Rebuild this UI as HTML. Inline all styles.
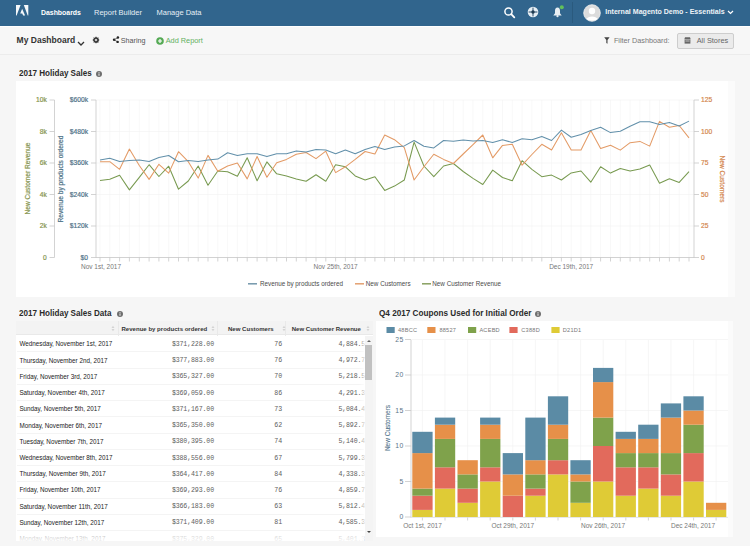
<!DOCTYPE html>
<html><head><meta charset="utf-8">
<style>
*{margin:0;padding:0;box-sizing:border-box}
html,body{width:750px;height:546px;overflow:hidden;background:#f6f6f6;font-family:"Liberation Sans",sans-serif;position:relative}
.abs{position:absolute}
.ttl{font-weight:bold;font-size:8.9px;color:#2b2b2b;transform:scaleX(0.91);transform-origin:0 0}
#hdr{position:absolute;left:0;top:0;width:750px;height:25.5px;background:#31658d}
#hdr .n{position:absolute;top:7.6px;color:#e6eef5;font-size:7.5px;white-space:nowrap}
#sub{position:absolute;left:0;top:26.5px;width:750px;height:28.5px;background:#f7f7f7;border-bottom:1px solid #ececec}
.txt{position:absolute;white-space:nowrap;line-height:1}
.panel{position:absolute;background:#fff}
.tr{position:absolute;left:1px;width:347px;height:16.2px;border-bottom:0.5px solid #f4f4f4;font-size:6.3px;color:#222;white-space:nowrap}
.tr span{position:absolute;top:5px;line-height:1}
.tr .c1{left:2.4px;top:5.1px}
.tr .c2{right:150px;font-family:"Liberation Mono",monospace;font-size:6.6px;letter-spacing:-0.13px;color:#606060;top:5.7px}
.tr .c3{right:82px;font-family:"Liberation Mono",monospace;font-size:6.6px;letter-spacing:-0.13px;color:#606060;top:5.7px}
.tr .c4{left:321.4px;font-family:"Liberation Mono",monospace;font-size:6.6px;letter-spacing:-0.13px;color:#606060;top:5.7px}
</style></head><body>
<div id="hdr">
 <svg class="abs" style="left:16px;top:5px" width="12.5" height="10.8" viewBox="0 0 12.5 10.8"><path d="M0,0 H4.6 L0.6,10.6 H0 Z M7.8,0 H12.3 V10.6 H11.7 Z M6.15,3.7 L9.1,10.6 H7.1 L6.25,8.4 H4.2 Z" fill="#f4f8fb"/></svg>
 <div class="n" style="left:40.6px;font-weight:bold;color:#fff;font-size:7.5px;top:7.7px;transform:scaleX(0.92);transform-origin:0 0">Dashboards</div>
 <div class="n" style="left:94px">Report Builder</div>
 <div class="n" style="left:156.5px">Manage Data</div>
 <svg class="abs" style="left:503px;top:6px" width="13" height="13" viewBox="0 0 13 13"><circle cx="5.5" cy="5.5" r="3.6" fill="none" stroke="#fff" stroke-width="1.5"/><path d="M8.2,8.2 L11.3,11.3" stroke="#fff" stroke-width="1.8" stroke-linecap="round"/></svg>
 <svg class="abs" style="left:527.3px;top:6px" width="12" height="12" viewBox="0 0 12 12"><circle cx="6" cy="6" r="5.3" fill="#e6eef4"/><path d="M6,1.6V10.4M1.6,6H10.4" stroke="#2c4f6b" stroke-width="1"/><circle cx="6" cy="6" r="1.7" fill="#1f3a50"/></svg>
 <svg class="abs" style="left:550.5px;top:4px" width="14" height="14" viewBox="0 0 14 14"><path d="M6.5,3.6 C4.7,3.6 4,5 4,6.8 L4,9.3 L2.3,11.6 L10.7,11.6 L9,9.3 L9,6.8 C9,5 8.3,3.6 6.5,3.6 Z" fill="#e8eef3"/><circle cx="6.5" cy="12.2" r="1.1" fill="#e8eef3"/><circle cx="10.8" cy="3.3" r="2" fill="#62c05a"/></svg>
 <div class="abs" style="left:572px;top:2px;width:1px;height:21px;background:#2a5a7e"></div>
 <svg class="abs" style="left:583px;top:3.5px" width="18" height="18" viewBox="0 0 18 18"><circle cx="9" cy="9" r="8.3" fill="#dcdcdc" stroke="#f2f2f2" stroke-width="0.8"/><circle cx="9" cy="7" r="3.2" fill="#fff"/><path d="M3.5,15 C4.5,11.5 13.5,11.5 14.5,15 C12.5,17 5.5,17 3.5,15Z" fill="#fff"/></svg>
 <div class="n" style="left:605.3px;font-weight:bold;color:#eef3f7;font-size:7.07px;top:7.8px">Internal Magento Demo - Essentials</div>
 <svg class="abs" style="left:727px;top:10px" width="7" height="5" viewBox="0 0 7 5"><path d="M1,1 L3.5,3.5 L6,1" fill="none" stroke="#fff" stroke-width="1.2"/></svg>
</div>
<div class="abs" style="left:0;top:25.5px;width:750px;height:1px;background:#fff"></div>
<div id="sub">
 <div class="txt" style="left:16.6px;top:9.8px;font-weight:bold;font-size:8.5px;color:#333">My Dashboard</div>
 <svg class="abs" style="left:77px;top:14px" width="8" height="6" viewBox="0 0 8 6"><path d="M1,1 L4,4 L7,1" fill="none" stroke="#333" stroke-width="1.3"/></svg>
 <svg class="abs" style="left:92.3px;top:9.8px" width="8" height="8" viewBox="0 0 8 8"><circle cx="4" cy="4" r="2.1" fill="none" stroke="#333" stroke-width="1.5"/><path d="M4,0.7V7.3M0.7,4H7.3M1.7,1.7L6.3,6.3M6.3,1.7L1.7,6.3" stroke="#333" stroke-width="0.9"/><circle cx="4" cy="4" r="1" fill="#f7f7f7"/></svg>
 <svg class="abs" style="left:112px;top:9.5px" width="8" height="7" viewBox="0 0 8 7"><circle cx="2.1" cy="3.7" r="1.25" fill="#222"/><circle cx="5.9" cy="1.6" r="1.25" fill="#222"/><circle cx="5.6" cy="5.9" r="1.25" fill="#222"/><path d="M2.1,3.7L5.9,1.6M2.1,3.7L5.6,5.9" stroke="#333" stroke-width="0.7"/></svg>
 <div class="txt" style="left:120.8px;top:10.8px;font-size:7.2px;color:#555">Sharing</div>
 <svg class="abs" style="left:155.8px;top:10.2px" width="8" height="8" viewBox="0 0 8 8"><circle cx="4" cy="4" r="3.8" fill="#55aa55"/><path d="M4,2V6M2,4H6" stroke="#fff" stroke-width="1.2"/></svg>
 <div class="txt" style="left:165.7px;top:10.8px;font-size:7.35px;color:#62b062">Add Report</div>
 <svg class="abs" style="left:604.2px;top:10.2px" width="6" height="7" viewBox="0 0 6 7"><path d="M0.2,0.3H5.6L3.5,3V6.7L2.3,6V3Z" fill="#444"/></svg>
 <div class="txt" style="left:613.9px;top:10.8px;font-size:7.26px;color:#777">Filter Dashboard:</div>
 <div class="abs" style="left:677.2px;top:6px;width:57.2px;height:16.5px;background:#ebebeb;border:1px solid #cdcdcd;border-radius:2px"></div>
 <svg class="abs" style="left:684.2px;top:10.8px" width="7" height="7" viewBox="0 0 7 7"><path d="M0.3,2.2L1,0.3H6L6.7,2.2Z" fill="#666"/><rect x="0.6" y="2.6" width="5.8" height="4" fill="#666"/><rect x="1.4" y="3.6" width="4.2" height="0.8" fill="#ddd"/></svg>
 <div class="txt" style="left:696.7px;top:10.8px;font-size:7.36px;color:#666">All Stores</div>
</div>

<div class="txt ttl" style="left:19px;top:68.6px">2017 Holiday Sales</div>
<svg class="abs" style="left:96.2px;top:71.3px" width="6" height="6" viewBox="0 0 6 6"><circle cx="3" cy="3" r="3" fill="#6e6e6e"/><rect x="2.5" y="2.5" width="1" height="2.3" fill="#eee"/><rect x="2.5" y="1.2" width="1" height="0.9" fill="#eee"/></svg>
<div class="panel" style="left:16px;top:80.5px;width:719px;height:216.8px"><div class="abs" style="left:712px;top:0;width:7px;height:216.8px;background:#fbfbfb"></div></div>

<div class="txt ttl" style="left:19.4px;top:308.7px">2017 Holiday Sales Data</div>
<svg class="abs" style="left:116.6px;top:311.2px" width="6" height="6" viewBox="0 0 6 6"><circle cx="3" cy="3" r="3" fill="#6e6e6e"/><rect x="2.5" y="2.5" width="1" height="2.3" fill="#eee"/><rect x="2.5" y="1.2" width="1" height="0.9" fill="#eee"/></svg>
<div class="panel" style="left:16px;top:320.8px;width:356.5px;height:220.2px;overflow:hidden">
 <div class="abs" style="left:0;top:0;width:356.5px;height:14.7px;background:#f3f3f3;border-bottom:1px solid #e9e9e9"></div>
</div>
<div class="abs" style="left:16px;top:336px;width:356.5px;height:205px;overflow:hidden"><div class="tr" style="top:0.3px"><span class="c1">Wednesday, November 1st, 2017</span><span class="c2">$371,228.00</span><span class="c3">76</span><span class="c4">4,884.55</span></div>
<div class="tr" style="top:16.5px"><span class="c1">Thursday, November 2nd, 2017</span><span class="c2">$377,883.00</span><span class="c3">76</span><span class="c4">4,972.71</span></div>
<div class="tr" style="top:32.8px"><span class="c1">Friday, November 3rd, 2017</span><span class="c2">$365,327.00</span><span class="c3">70</span><span class="c4">5,218.59</span></div>
<div class="tr" style="top:49.0px"><span class="c1">Saturday, November 4th, 2017</span><span class="c2">$369,059.00</span><span class="c3">86</span><span class="c4">4,291.31</span></div>
<div class="tr" style="top:65.2px"><span class="c1">Sunday, November 5th, 2017</span><span class="c2">$371,167.00</span><span class="c3">73</span><span class="c4">5,084.41</span></div>
<div class="tr" style="top:81.5px"><span class="c1">Monday, November 6th, 2017</span><span class="c2">$365,350.00</span><span class="c3">62</span><span class="c4">5,892.71</span></div>
<div class="tr" style="top:97.7px"><span class="c1">Tuesday, November 7th, 2017</span><span class="c2">$380,395.00</span><span class="c3">74</span><span class="c4">5,140.41</span></div>
<div class="tr" style="top:113.9px"><span class="c1">Wednesday, November 8th, 2017</span><span class="c2">$388,556.00</span><span class="c3">67</span><span class="c4">5,799.31</span></div>
<div class="tr" style="top:130.1px"><span class="c1">Thursday, November 9th, 2017</span><span class="c2">$364,417.00</span><span class="c3">84</span><span class="c4">4,338.31</span></div>
<div class="tr" style="top:146.4px"><span class="c1">Friday, November 10th, 2017</span><span class="c2">$369,293.00</span><span class="c3">76</span><span class="c4">4,859.71</span></div>
<div class="tr" style="top:162.6px"><span class="c1">Saturday, November 11th, 2017</span><span class="c2">$366,183.00</span><span class="c3">63</span><span class="c4">5,812.41</span></div>
<div class="tr" style="top:178.8px"><span class="c1">Sunday, November 12th, 2017</span><span class="c2">$371,409.00</span><span class="c3">81</span><span class="c4">4,585.31</span></div>
<div class="tr" style="top:195.1px"><span class="c1">Monday, November 13th, 2017</span><span class="c2">$375,329.00</span><span class="c3">65</span><span class="c4">5,401.31</span></div></div>
<div class="abs" style="left:17px;top:321px;width:355px;height:14.5px;font-size:6.05px;font-weight:bold;color:#333">
 <div class="abs" style="left:100.7px;top:0;width:1px;height:14.5px;background:#e9e9e9"></div>
 <div class="abs" style="left:200.2px;top:0;width:1px;height:14.5px;background:#e9e9e9"></div>
 <div class="abs" style="left:267.7px;top:0;width:1px;height:14.5px;background:#e9e9e9"></div>
 <div class="txt" style="left:104.5px;top:4.5px">Revenue by products ordered</div>
 <div class="txt" style="left:211px;top:4.5px">New Customers</div>
 <div class="txt" style="left:274.7px;top:4.5px">New Customer Revenue</div>
 <svg class="abs" style="left:94.2px;top:4px" width="4" height="7" viewBox="0 0 4 7"><path d="M0.5,3L2,0.8L3.5,3ZM0.5,4L2,6.2L3.5,4Z" fill="#d4d4d4"/></svg>
 <svg class="abs" style="left:193.6px;top:4px" width="4" height="7" viewBox="0 0 4 7"><path d="M0.5,3L2,0.8L3.5,3ZM0.5,4L2,6.2L3.5,4Z" fill="#d4d4d4"/></svg>
 <svg class="abs" style="left:264.9px;top:4px" width="4" height="7" viewBox="0 0 4 7"><path d="M0.5,3L2,0.8L3.5,3ZM0.5,4L2,6.2L3.5,4Z" fill="#d4d4d4"/></svg>
 <svg class="abs" style="left:349.2px;top:4px" width="4" height="7" viewBox="0 0 4 7"><path d="M0.5,3L2,0.8L3.5,3ZM0.5,4L2,6.2L3.5,4Z" fill="#d4d4d4"/></svg>
</div>
<div class="abs" style="left:359px;top:336px;width:5.6px;height:205px;background:linear-gradient(90deg,rgba(255,255,255,0),rgba(255,255,255,0.85))"></div><div class="abs" style="left:364.6px;top:336px;width:8px;height:205px;background:#f4f4f4"></div><svg class="abs" style="left:365.5px;top:339px" width="6" height="4" viewBox="0 0 6 4"><path d="M1,3L3,1L5,3Z" fill="#666"/></svg><svg class="abs" style="left:365.5px;top:530px" width="6" height="4" viewBox="0 0 6 4"><path d="M1,1L3,3L5,1Z" fill="#444"/></svg>
<div class="abs" style="left:365px;top:345px;width:6.5px;height:35px;background:#c1c1c1"></div>
<div class="abs" style="left:16px;top:532px;width:348px;height:9px;background:linear-gradient(rgba(255,255,255,0.6),rgba(255,255,255,0.92))"></div>

<div class="txt ttl" style="left:378.7px;top:308.7px;transform:scaleX(0.92)">Q4 2017 Coupons Used for Initial Order</div>
<svg class="abs" style="left:535.3px;top:311.2px" width="6" height="6" viewBox="0 0 6 6"><circle cx="3" cy="3" r="3" fill="#6e6e6e"/><rect x="2.5" y="2.5" width="1" height="2.3" fill="#eee"/><rect x="2.5" y="1.2" width="1" height="0.9" fill="#eee"/></svg>
<div class="panel" style="left:375.6px;top:320.8px;width:357.6px;height:216.3px"><div class="abs" style="left:352.4px;top:0;width:5.2px;height:216.3px;background:#fbfbfb"></div></div>
<svg class="abs" style="left:0;top:0" width="750" height="300" viewBox="0 0 750 300">
<g stroke="#f4f4f4" stroke-width="0.6"><line x1="100.0" y1="100.0" x2="100.0" y2="257.5"/><line x1="109.8" y1="100.0" x2="109.8" y2="257.5"/><line x1="119.6" y1="100.0" x2="119.6" y2="257.5"/><line x1="129.4" y1="100.0" x2="129.4" y2="257.5"/><line x1="139.3" y1="100.0" x2="139.3" y2="257.5"/><line x1="149.1" y1="100.0" x2="149.1" y2="257.5"/><line x1="158.9" y1="100.0" x2="158.9" y2="257.5"/><line x1="168.7" y1="100.0" x2="168.7" y2="257.5"/><line x1="178.5" y1="100.0" x2="178.5" y2="257.5"/><line x1="188.3" y1="100.0" x2="188.3" y2="257.5"/><line x1="198.2" y1="100.0" x2="198.2" y2="257.5"/><line x1="208.0" y1="100.0" x2="208.0" y2="257.5"/><line x1="217.8" y1="100.0" x2="217.8" y2="257.5"/><line x1="227.6" y1="100.0" x2="227.6" y2="257.5"/><line x1="237.4" y1="100.0" x2="237.4" y2="257.5"/><line x1="247.2" y1="100.0" x2="247.2" y2="257.5"/><line x1="257.1" y1="100.0" x2="257.1" y2="257.5"/><line x1="266.9" y1="100.0" x2="266.9" y2="257.5"/><line x1="276.7" y1="100.0" x2="276.7" y2="257.5"/><line x1="286.5" y1="100.0" x2="286.5" y2="257.5"/><line x1="296.3" y1="100.0" x2="296.3" y2="257.5"/><line x1="306.1" y1="100.0" x2="306.1" y2="257.5"/><line x1="316.0" y1="100.0" x2="316.0" y2="257.5"/><line x1="325.8" y1="100.0" x2="325.8" y2="257.5"/><line x1="335.6" y1="100.0" x2="335.6" y2="257.5"/><line x1="345.4" y1="100.0" x2="345.4" y2="257.5"/><line x1="355.2" y1="100.0" x2="355.2" y2="257.5"/><line x1="365.1" y1="100.0" x2="365.1" y2="257.5"/><line x1="374.9" y1="100.0" x2="374.9" y2="257.5"/><line x1="384.7" y1="100.0" x2="384.7" y2="257.5"/><line x1="394.5" y1="100.0" x2="394.5" y2="257.5"/><line x1="404.3" y1="100.0" x2="404.3" y2="257.5"/><line x1="414.1" y1="100.0" x2="414.1" y2="257.5"/><line x1="423.9" y1="100.0" x2="423.9" y2="257.5"/><line x1="433.8" y1="100.0" x2="433.8" y2="257.5"/><line x1="443.6" y1="100.0" x2="443.6" y2="257.5"/><line x1="453.4" y1="100.0" x2="453.4" y2="257.5"/><line x1="463.2" y1="100.0" x2="463.2" y2="257.5"/><line x1="473.0" y1="100.0" x2="473.0" y2="257.5"/><line x1="482.8" y1="100.0" x2="482.8" y2="257.5"/><line x1="492.7" y1="100.0" x2="492.7" y2="257.5"/><line x1="502.5" y1="100.0" x2="502.5" y2="257.5"/><line x1="512.3" y1="100.0" x2="512.3" y2="257.5"/><line x1="522.1" y1="100.0" x2="522.1" y2="257.5"/><line x1="531.9" y1="100.0" x2="531.9" y2="257.5"/><line x1="541.8" y1="100.0" x2="541.8" y2="257.5"/><line x1="551.6" y1="100.0" x2="551.6" y2="257.5"/><line x1="561.4" y1="100.0" x2="561.4" y2="257.5"/><line x1="571.2" y1="100.0" x2="571.2" y2="257.5"/><line x1="581.0" y1="100.0" x2="581.0" y2="257.5"/><line x1="590.8" y1="100.0" x2="590.8" y2="257.5"/><line x1="600.6" y1="100.0" x2="600.6" y2="257.5"/><line x1="610.5" y1="100.0" x2="610.5" y2="257.5"/><line x1="620.3" y1="100.0" x2="620.3" y2="257.5"/><line x1="630.1" y1="100.0" x2="630.1" y2="257.5"/><line x1="639.9" y1="100.0" x2="639.9" y2="257.5"/><line x1="649.7" y1="100.0" x2="649.7" y2="257.5"/><line x1="659.5" y1="100.0" x2="659.5" y2="257.5"/><line x1="669.4" y1="100.0" x2="669.4" y2="257.5"/><line x1="679.2" y1="100.0" x2="679.2" y2="257.5"/><line x1="689.0" y1="100.0" x2="689.0" y2="257.5"/></g>
<g stroke="#f1f1f1" stroke-width="0.6"><line x1="96" y1="100.0" x2="694" y2="100.0"/><line x1="96" y1="131.5" x2="694" y2="131.5"/><line x1="96" y1="163.0" x2="694" y2="163.0"/><line x1="96" y1="194.5" x2="694" y2="194.5"/><line x1="96" y1="226.0" x2="694" y2="226.0"/><line x1="96" y1="257.5" x2="694" y2="257.5"/></g>
<g stroke="#c8c8c8" stroke-width="0.8">
<line x1="54.5" y1="100" x2="54.5" y2="257.5"/>
<line x1="96" y1="100" x2="96" y2="258"/>
<line x1="694" y1="100" x2="694" y2="258"/>
<line x1="96" y1="257.5" x2="694" y2="257.5"/>
<line x1="100.0" y1="257.5" x2="100.0" y2="261.5"/><line x1="109.8" y1="257.5" x2="109.8" y2="261.5"/><line x1="119.6" y1="257.5" x2="119.6" y2="261.5"/><line x1="129.4" y1="257.5" x2="129.4" y2="261.5"/><line x1="139.3" y1="257.5" x2="139.3" y2="261.5"/><line x1="149.1" y1="257.5" x2="149.1" y2="261.5"/><line x1="158.9" y1="257.5" x2="158.9" y2="261.5"/><line x1="168.7" y1="257.5" x2="168.7" y2="261.5"/><line x1="178.5" y1="257.5" x2="178.5" y2="261.5"/><line x1="188.3" y1="257.5" x2="188.3" y2="261.5"/><line x1="198.2" y1="257.5" x2="198.2" y2="261.5"/><line x1="208.0" y1="257.5" x2="208.0" y2="261.5"/><line x1="217.8" y1="257.5" x2="217.8" y2="261.5"/><line x1="227.6" y1="257.5" x2="227.6" y2="261.5"/><line x1="237.4" y1="257.5" x2="237.4" y2="261.5"/><line x1="247.2" y1="257.5" x2="247.2" y2="261.5"/><line x1="257.1" y1="257.5" x2="257.1" y2="261.5"/><line x1="266.9" y1="257.5" x2="266.9" y2="261.5"/><line x1="276.7" y1="257.5" x2="276.7" y2="261.5"/><line x1="286.5" y1="257.5" x2="286.5" y2="261.5"/><line x1="296.3" y1="257.5" x2="296.3" y2="261.5"/><line x1="306.1" y1="257.5" x2="306.1" y2="261.5"/><line x1="316.0" y1="257.5" x2="316.0" y2="261.5"/><line x1="325.8" y1="257.5" x2="325.8" y2="261.5"/><line x1="335.6" y1="257.5" x2="335.6" y2="261.5"/><line x1="345.4" y1="257.5" x2="345.4" y2="261.5"/><line x1="355.2" y1="257.5" x2="355.2" y2="261.5"/><line x1="365.1" y1="257.5" x2="365.1" y2="261.5"/><line x1="374.9" y1="257.5" x2="374.9" y2="261.5"/><line x1="384.7" y1="257.5" x2="384.7" y2="261.5"/><line x1="394.5" y1="257.5" x2="394.5" y2="261.5"/><line x1="404.3" y1="257.5" x2="404.3" y2="261.5"/><line x1="414.1" y1="257.5" x2="414.1" y2="261.5"/><line x1="423.9" y1="257.5" x2="423.9" y2="261.5"/><line x1="433.8" y1="257.5" x2="433.8" y2="261.5"/><line x1="443.6" y1="257.5" x2="443.6" y2="261.5"/><line x1="453.4" y1="257.5" x2="453.4" y2="261.5"/><line x1="463.2" y1="257.5" x2="463.2" y2="261.5"/><line x1="473.0" y1="257.5" x2="473.0" y2="261.5"/><line x1="482.8" y1="257.5" x2="482.8" y2="261.5"/><line x1="492.7" y1="257.5" x2="492.7" y2="261.5"/><line x1="502.5" y1="257.5" x2="502.5" y2="261.5"/><line x1="512.3" y1="257.5" x2="512.3" y2="261.5"/><line x1="522.1" y1="257.5" x2="522.1" y2="261.5"/><line x1="531.9" y1="257.5" x2="531.9" y2="261.5"/><line x1="541.8" y1="257.5" x2="541.8" y2="261.5"/><line x1="551.6" y1="257.5" x2="551.6" y2="261.5"/><line x1="561.4" y1="257.5" x2="561.4" y2="261.5"/><line x1="571.2" y1="257.5" x2="571.2" y2="261.5"/><line x1="581.0" y1="257.5" x2="581.0" y2="261.5"/><line x1="590.8" y1="257.5" x2="590.8" y2="261.5"/><line x1="600.6" y1="257.5" x2="600.6" y2="261.5"/><line x1="610.5" y1="257.5" x2="610.5" y2="261.5"/><line x1="620.3" y1="257.5" x2="620.3" y2="261.5"/><line x1="630.1" y1="257.5" x2="630.1" y2="261.5"/><line x1="639.9" y1="257.5" x2="639.9" y2="261.5"/><line x1="649.7" y1="257.5" x2="649.7" y2="261.5"/><line x1="659.5" y1="257.5" x2="659.5" y2="261.5"/><line x1="669.4" y1="257.5" x2="669.4" y2="261.5"/><line x1="679.2" y1="257.5" x2="679.2" y2="261.5"/><line x1="689.0" y1="257.5" x2="689.0" y2="261.5"/></g>
<g font-family="Liberation Sans, sans-serif" font-size="6.7" stroke-width="0.8"><text x="46.8" y="102.3" text-anchor="end" fill="#86944e" stroke="#86944e" stroke-width="0.2">10k</text><text x="88" y="102.3" text-anchor="end" fill="#4f7388" stroke="#4f7388" stroke-width="0.2">$600k</text><text x="701" y="102.3" text-anchor="start" fill="#d4874f" stroke="#d4874f" stroke-width="0.2">125</text><line x1="49.5" y1="100.0" x2="54.5" y2="100.0" stroke="#c8c8c8"/><line x1="91" y1="100.0" x2="96" y2="100.0" stroke="#c8c8c8"/><line x1="694" y1="100.0" x2="699" y2="100.0" stroke="#c8c8c8"/><text x="46.8" y="133.8" text-anchor="end" fill="#86944e" stroke="#86944e" stroke-width="0.2">8k</text><text x="88" y="133.8" text-anchor="end" fill="#4f7388" stroke="#4f7388" stroke-width="0.2">$480k</text><text x="701" y="133.8" text-anchor="start" fill="#d4874f" stroke="#d4874f" stroke-width="0.2">100</text><line x1="49.5" y1="131.5" x2="54.5" y2="131.5" stroke="#c8c8c8"/><line x1="91" y1="131.5" x2="96" y2="131.5" stroke="#c8c8c8"/><line x1="694" y1="131.5" x2="699" y2="131.5" stroke="#c8c8c8"/><text x="46.8" y="165.3" text-anchor="end" fill="#86944e" stroke="#86944e" stroke-width="0.2">6k</text><text x="88" y="165.3" text-anchor="end" fill="#4f7388" stroke="#4f7388" stroke-width="0.2">$360k</text><text x="701" y="165.3" text-anchor="start" fill="#d4874f" stroke="#d4874f" stroke-width="0.2">75</text><line x1="49.5" y1="163.0" x2="54.5" y2="163.0" stroke="#c8c8c8"/><line x1="91" y1="163.0" x2="96" y2="163.0" stroke="#c8c8c8"/><line x1="694" y1="163.0" x2="699" y2="163.0" stroke="#c8c8c8"/><text x="46.8" y="196.8" text-anchor="end" fill="#86944e" stroke="#86944e" stroke-width="0.2">4k</text><text x="88" y="196.8" text-anchor="end" fill="#4f7388" stroke="#4f7388" stroke-width="0.2">$240k</text><text x="701" y="196.8" text-anchor="start" fill="#d4874f" stroke="#d4874f" stroke-width="0.2">50</text><line x1="49.5" y1="194.5" x2="54.5" y2="194.5" stroke="#c8c8c8"/><line x1="91" y1="194.5" x2="96" y2="194.5" stroke="#c8c8c8"/><line x1="694" y1="194.5" x2="699" y2="194.5" stroke="#c8c8c8"/><text x="46.8" y="228.3" text-anchor="end" fill="#86944e" stroke="#86944e" stroke-width="0.2">2k</text><text x="88" y="228.3" text-anchor="end" fill="#4f7388" stroke="#4f7388" stroke-width="0.2">$120k</text><text x="701" y="228.3" text-anchor="start" fill="#d4874f" stroke="#d4874f" stroke-width="0.2">25</text><line x1="49.5" y1="226.0" x2="54.5" y2="226.0" stroke="#c8c8c8"/><line x1="91" y1="226.0" x2="96" y2="226.0" stroke="#c8c8c8"/><line x1="694" y1="226.0" x2="699" y2="226.0" stroke="#c8c8c8"/><text x="46.8" y="259.8" text-anchor="end" fill="#86944e" stroke="#86944e" stroke-width="0.2">0</text><text x="88" y="259.8" text-anchor="end" fill="#4f7388" stroke="#4f7388" stroke-width="0.2">$0</text><text x="701" y="259.8" text-anchor="start" fill="#d4874f" stroke="#d4874f" stroke-width="0.2">0</text><line x1="49.5" y1="257.5" x2="54.5" y2="257.5" stroke="#c8c8c8"/><line x1="91" y1="257.5" x2="96" y2="257.5" stroke="#c8c8c8"/><line x1="694" y1="257.5" x2="699" y2="257.5" stroke="#c8c8c8"/></g>
<g fill="none" stroke-width="1.05" stroke-linejoin="round">
<path d="M100.0,180.6 L109.8,179.2 L119.6,175.3 L129.4,189.9 L139.3,177.4 L149.1,164.7 L158.9,176.5 L168.7,166.2 L178.5,189.2 L188.3,181.0 L198.2,166.0 L208.0,185.3 L217.8,171.0 L227.6,171.8 L237.4,176.2 L247.2,157.8 L257.1,180.8 L266.9,161.9 L276.7,173.8 L286.5,175.9 L296.3,178.9 L306.1,181.2 L316.0,174.7 L325.8,181.2 L335.6,164.7 L345.4,166.8 L355.2,175.9 L365.1,180.0 L374.9,176.7 L384.7,190.4 L394.5,186.1 L404.3,180.0 L414.1,142.1 L423.9,166.0 L433.8,176.7 L443.6,166.0 L453.4,163.5 L463.2,171.5 L473.0,178.4 L482.8,184.5 L492.7,170.1 L502.5,177.5 L512.3,180.8 L522.1,160.7 L531.9,169.3 L541.8,176.7 L551.6,175.1 L561.4,180.0 L571.2,172.9 L581.0,171.0 L590.8,182.2 L600.6,166.8 L610.5,173.1 L620.3,168.5 L630.1,171.1 L639.9,169.1 L649.7,165.1 L659.5,183.2 L669.4,178.7 L679.2,182.4 L689.0,171.7" stroke="#789a50"/>
<path d="M100.0,161.7 L109.8,161.7 L119.6,169.3 L129.4,149.1 L139.3,165.5 L149.1,179.4 L158.9,164.3 L168.7,173.1 L178.5,151.7 L188.3,161.7 L198.2,178.1 L208.0,155.4 L217.8,171.3 L227.6,166.0 L237.4,163.0 L247.2,178.9 L257.1,156.5 L266.9,177.2 L276.7,162.7 L286.5,159.4 L296.3,154.2 L306.1,152.5 L316.0,158.6 L325.8,151.2 L335.6,172.6 L345.4,166.8 L355.2,159.4 L365.1,151.5 L374.9,154.0 L384.7,135.0 L394.5,139.7 L404.3,147.6 L414.1,180.0 L423.9,166.8 L433.8,154.2 L443.6,159.4 L453.4,163.5 L463.2,154.0 L473.0,144.6 L482.8,135.0 L492.7,157.8 L502.5,145.4 L512.3,144.3 L522.1,165.2 L531.9,154.5 L541.8,144.3 L551.6,150.0 L561.4,132.7 L571.2,150.0 L581.0,150.0 L590.8,130.6 L600.6,148.4 L610.5,145.3 L620.3,150.1 L630.1,142.7 L639.9,141.4 L649.7,146.1 L659.5,121.4 L669.4,127.2 L679.2,125.5 L689.0,137.9" stroke="#e39a65"/>
<path d="M100.0,160.1 L109.8,158.3 L119.6,161.6 L129.4,160.6 L139.3,160.1 L149.1,161.6 L158.9,157.6 L168.7,155.5 L178.5,161.8 L188.3,160.6 L198.2,161.4 L208.0,160.0 L217.8,159.1 L227.6,152.8 L237.4,155.6 L247.2,153.7 L257.1,153.7 L266.9,156.6 L276.7,153.7 L286.5,153.7 L296.3,150.9 L306.1,152.0 L316.0,149.5 L325.8,150.0 L335.6,153.7 L345.4,150.0 L355.2,153.7 L365.1,149.5 L374.9,146.6 L384.7,149.5 L394.5,147.1 L404.3,145.9 L414.1,140.5 L423.9,146.2 L433.8,147.9 L443.6,140.5 L453.4,141.3 L463.2,140.1 L473.0,141.0 L482.8,140.5 L492.7,142.5 L502.5,139.7 L512.3,142.5 L522.1,138.8 L531.9,139.7 L541.8,136.4 L551.6,140.5 L561.4,130.1 L571.2,137.2 L581.0,134.4 L590.8,130.6 L600.6,127.3 L610.5,132.6 L620.3,131.2 L630.1,126.2 L639.9,121.8 L649.7,121.7 L659.5,124.4 L669.4,122.6 L679.2,126.0 L689.0,121.1" stroke="#6290aa"/>
</g>
<g font-family="Liberation Sans, sans-serif" font-size="6.5" fill="#777">
<text x="101" y="268.5" text-anchor="middle">Nov 1st, 2017</text>
<text x="335.6" y="268.5" text-anchor="middle">Nov 25th, 2017</text>
<text x="571.2" y="268.5" text-anchor="middle">Dec 19th, 2017</text>
</g>
<g font-family="Liberation Sans, sans-serif" font-size="6.6">
<text transform="translate(30,178.5) rotate(-90)" text-anchor="middle" fill="#86944e" stroke="#86944e" stroke-width="0.2">New Customer Revenue</text>
<text transform="translate(63.2,179) rotate(-90)" text-anchor="middle" fill="#4f7388" stroke="#4f7388" stroke-width="0.2">Revenue by products ordered</text>
<text transform="translate(719.5,179) rotate(90)" text-anchor="middle" fill="#d4874f" stroke="#d4874f" stroke-width="0.2">New Customers</text>
</g>
<g font-family="Liberation Sans, sans-serif" font-size="6.3" fill="#4a4a4a">
<line x1="248" y1="283.8" x2="257" y2="283.8" stroke="#7397ab" stroke-width="1.5"/>
<text x="260" y="285.5">Revenue by products ordered</text>
<line x1="355" y1="283.8" x2="364" y2="283.8" stroke="#e3a070" stroke-width="1.5"/>
<text x="365.8" y="285.5">New Customers</text>
<line x1="422" y1="283.8" x2="431" y2="283.8" stroke="#88a060" stroke-width="1.5"/>
<text x="432.3" y="285.5">New Customer Revenue</text>
</g>
</svg>
<svg class="abs" style="left:0;top:0" width="750" height="546" viewBox="0 0 750 546">
<g stroke="#f0f0f0" stroke-width="0.6"><line x1="411" y1="517.0" x2="728" y2="517.0"/><line x1="411" y1="481.5" x2="728" y2="481.5"/><line x1="411" y1="446.0" x2="728" y2="446.0"/><line x1="411" y1="410.5" x2="728" y2="410.5"/><line x1="411" y1="375.0" x2="728" y2="375.0"/><line x1="411" y1="339.5" x2="728" y2="339.5"/><line x1="422.4" y1="340" x2="422.4" y2="517"/><line x1="445.0" y1="340" x2="445.0" y2="517"/><line x1="467.6" y1="340" x2="467.6" y2="517"/><line x1="490.2" y1="340" x2="490.2" y2="517"/><line x1="512.8" y1="340" x2="512.8" y2="517"/><line x1="535.4" y1="340" x2="535.4" y2="517"/><line x1="558.0" y1="340" x2="558.0" y2="517"/><line x1="580.6" y1="340" x2="580.6" y2="517"/><line x1="603.2" y1="340" x2="603.2" y2="517"/><line x1="625.8" y1="340" x2="625.8" y2="517"/><line x1="648.4" y1="340" x2="648.4" y2="517"/><line x1="671.0" y1="340" x2="671.0" y2="517"/><line x1="693.6" y1="340" x2="693.6" y2="517"/><line x1="716.1" y1="340" x2="716.1" y2="517"/></g>
<rect x="412.3" y="509.9" width="20.3" height="7.1" fill="#dfcb36"/><rect x="412.3" y="495.7" width="20.3" height="14.2" fill="#e26a5c"/><rect x="412.3" y="488.6" width="20.3" height="7.1" fill="#7fa24b"/><rect x="412.3" y="453.1" width="20.3" height="35.5" fill="#e69049"/><rect x="412.3" y="431.8" width="20.3" height="21.3" fill="#5b8ba5"/><rect x="434.9" y="488.6" width="20.3" height="28.4" fill="#dfcb36"/><rect x="434.9" y="467.3" width="20.3" height="21.3" fill="#e26a5c"/><rect x="434.9" y="438.9" width="20.3" height="28.4" fill="#7fa24b"/><rect x="434.9" y="424.7" width="20.3" height="14.2" fill="#e69049"/><rect x="434.9" y="417.6" width="20.3" height="7.1" fill="#5b8ba5"/><rect x="457.5" y="502.8" width="20.3" height="14.2" fill="#dfcb36"/><rect x="457.5" y="488.6" width="20.3" height="14.2" fill="#e26a5c"/><rect x="457.5" y="474.4" width="20.3" height="14.2" fill="#7fa24b"/><rect x="457.5" y="460.2" width="20.3" height="14.2" fill="#e69049"/><rect x="480.1" y="481.5" width="20.3" height="35.5" fill="#dfcb36"/><rect x="480.1" y="467.3" width="20.3" height="14.2" fill="#e26a5c"/><rect x="480.1" y="438.9" width="20.3" height="28.4" fill="#7fa24b"/><rect x="480.1" y="424.7" width="20.3" height="14.2" fill="#e69049"/><rect x="480.1" y="417.6" width="20.3" height="7.1" fill="#5b8ba5"/><rect x="502.7" y="495.7" width="20.3" height="21.3" fill="#e26a5c"/><rect x="502.7" y="474.4" width="20.3" height="21.3" fill="#e69049"/><rect x="502.7" y="453.1" width="20.3" height="21.3" fill="#5b8ba5"/><rect x="525.3" y="495.7" width="20.3" height="21.3" fill="#dfcb36"/><rect x="525.3" y="488.6" width="20.3" height="7.1" fill="#e26a5c"/><rect x="525.3" y="474.4" width="20.3" height="14.2" fill="#7fa24b"/><rect x="525.3" y="460.2" width="20.3" height="14.2" fill="#e69049"/><rect x="525.3" y="417.6" width="20.3" height="42.6" fill="#5b8ba5"/><rect x="547.9" y="474.4" width="20.3" height="42.6" fill="#dfcb36"/><rect x="547.9" y="460.2" width="20.3" height="14.2" fill="#e26a5c"/><rect x="547.9" y="438.9" width="20.3" height="21.3" fill="#7fa24b"/><rect x="547.9" y="424.7" width="20.3" height="14.2" fill="#e69049"/><rect x="547.9" y="396.3" width="20.3" height="28.4" fill="#5b8ba5"/><rect x="570.4" y="502.8" width="20.3" height="14.2" fill="#dfcb36"/><rect x="570.4" y="481.5" width="20.3" height="21.3" fill="#7fa24b"/><rect x="570.4" y="474.4" width="20.3" height="7.1" fill="#e69049"/><rect x="570.4" y="460.2" width="20.3" height="14.2" fill="#5b8ba5"/><rect x="593.0" y="481.5" width="20.3" height="35.5" fill="#dfcb36"/><rect x="593.0" y="446.0" width="20.3" height="35.5" fill="#e26a5c"/><rect x="593.0" y="417.6" width="20.3" height="28.4" fill="#7fa24b"/><rect x="593.0" y="382.1" width="20.3" height="35.5" fill="#e69049"/><rect x="593.0" y="367.9" width="20.3" height="14.2" fill="#5b8ba5"/><rect x="615.6" y="495.7" width="20.3" height="21.3" fill="#dfcb36"/><rect x="615.6" y="467.3" width="20.3" height="28.4" fill="#e26a5c"/><rect x="615.6" y="453.1" width="20.3" height="14.2" fill="#7fa24b"/><rect x="615.6" y="438.9" width="20.3" height="14.2" fill="#e69049"/><rect x="615.6" y="431.8" width="20.3" height="7.1" fill="#5b8ba5"/><rect x="638.2" y="488.6" width="20.3" height="28.4" fill="#dfcb36"/><rect x="638.2" y="467.3" width="20.3" height="21.3" fill="#e26a5c"/><rect x="638.2" y="453.1" width="20.3" height="14.2" fill="#7fa24b"/><rect x="638.2" y="438.9" width="20.3" height="14.2" fill="#e69049"/><rect x="638.2" y="424.7" width="20.3" height="14.2" fill="#5b8ba5"/><rect x="660.8" y="495.7" width="20.3" height="21.3" fill="#dfcb36"/><rect x="660.8" y="474.4" width="20.3" height="21.3" fill="#e26a5c"/><rect x="660.8" y="453.1" width="20.3" height="21.3" fill="#7fa24b"/><rect x="660.8" y="417.6" width="20.3" height="35.5" fill="#e69049"/><rect x="660.8" y="403.4" width="20.3" height="14.2" fill="#5b8ba5"/><rect x="683.4" y="481.5" width="20.3" height="35.5" fill="#dfcb36"/><rect x="683.4" y="453.1" width="20.3" height="28.4" fill="#e26a5c"/><rect x="683.4" y="424.7" width="20.3" height="28.4" fill="#7fa24b"/><rect x="683.4" y="410.5" width="20.3" height="14.2" fill="#e69049"/><rect x="683.4" y="396.3" width="20.3" height="14.2" fill="#5b8ba5"/><rect x="706.0" y="509.9" width="20.3" height="7.1" fill="#dfcb36"/><rect x="706.0" y="502.8" width="20.3" height="7.1" fill="#e69049"/>
<g stroke="#c8c8c8" stroke-width="0.8">
<line x1="411" y1="340" x2="411" y2="517.5"/>
<line x1="411" y1="517.5" x2="728" y2="517.5" stroke="#e2e2e2"/>
<line x1="422.4" y1="517.5" x2="422.4" y2="520.5" /><line x1="445.0" y1="517.5" x2="445.0" y2="520.5" /><line x1="467.6" y1="517.5" x2="467.6" y2="520.5" /><line x1="490.2" y1="517.5" x2="490.2" y2="520.5" /><line x1="512.8" y1="517.5" x2="512.8" y2="520.5" /><line x1="535.4" y1="517.5" x2="535.4" y2="520.5" /><line x1="558.0" y1="517.5" x2="558.0" y2="520.5" /><line x1="580.6" y1="517.5" x2="580.6" y2="520.5" /><line x1="603.2" y1="517.5" x2="603.2" y2="520.5" /><line x1="625.8" y1="517.5" x2="625.8" y2="520.5" /><line x1="648.4" y1="517.5" x2="648.4" y2="520.5" /><line x1="671.0" y1="517.5" x2="671.0" y2="520.5" /><line x1="693.6" y1="517.5" x2="693.6" y2="520.5" /><line x1="716.1" y1="517.5" x2="716.1" y2="520.5" />
</g>
<g font-family="Liberation Sans, sans-serif" font-size="6.8" fill="#5a7487" letter-spacing="0.3"><text x="403.5" y="519.3" text-anchor="end">0</text><line x1="405" y1="517.0" x2="411" y2="517.0" stroke="#c8c8c8" stroke-width="0.8"/><text x="403.5" y="483.8" text-anchor="end">5</text><line x1="405" y1="481.5" x2="411" y2="481.5" stroke="#c8c8c8" stroke-width="0.8"/><text x="403.5" y="448.3" text-anchor="end">10</text><line x1="405" y1="446.0" x2="411" y2="446.0" stroke="#c8c8c8" stroke-width="0.8"/><text x="403.5" y="412.8" text-anchor="end">15</text><line x1="405" y1="410.5" x2="411" y2="410.5" stroke="#c8c8c8" stroke-width="0.8"/><text x="403.5" y="377.3" text-anchor="end">20</text><line x1="405" y1="375.0" x2="411" y2="375.0" stroke="#c8c8c8" stroke-width="0.8"/><text x="403.5" y="341.8" text-anchor="end">25</text><line x1="405" y1="339.5" x2="411" y2="339.5" stroke="#c8c8c8" stroke-width="0.8"/></g>
<text transform="translate(390,428) rotate(-90)" text-anchor="middle" font-family="Liberation Sans, sans-serif" font-size="6.5" fill="#55768d" stroke="#55768d" stroke-width="0.1">New Customers</text>
<g font-family="Liberation Sans, sans-serif" font-size="6.5" fill="#777">
<text x="422.5" y="528.3" text-anchor="middle">Oct 1st, 2017</text>
<text x="512.7" y="528.3" text-anchor="middle">Oct 29th, 2017</text>
<text x="603" y="528.3" text-anchor="middle">Nov 26th, 2017</text>
<text x="693" y="528.3" text-anchor="middle">Dec 24th, 2017</text>
</g>
<g font-family="Liberation Sans, sans-serif" font-size="5.6" fill="#777" letter-spacing="0.25">
<rect x="386.5" y="327" width="8.2" height="6" fill="#5b8ba5"/><text x="398" y="332.2">48BCC</text>
<rect x="427.3" y="327" width="8.2" height="6" fill="#e69049"/><text x="439.4" y="332.2">88527</text>
<rect x="468" y="327" width="8.2" height="6" fill="#7fa24b"/><text x="479.4" y="332.2">ACEBD</text>
<rect x="509.4" y="327" width="8.2" height="6" fill="#e26a5c"/><text x="521.3" y="332.2">C388D</text>
<rect x="551.4" y="327" width="8.2" height="6" fill="#dfcb36"/><text x="562.8" y="332.2">D21D1</text>
</g>
</svg>
</body></html>
